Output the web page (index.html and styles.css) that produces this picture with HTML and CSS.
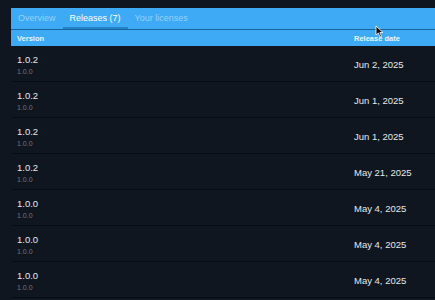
FILE: index.html
```html
<!DOCTYPE html>
<html lang="en">
<head>
    <meta charset="UTF-8">
    <title>Releases</title>
    <link rel="stylesheet" href="styles.css">
</head>
<body>
    <div class="panel">
        <div class="tabs">
            <span class="tab">Overview</span>
            <span class="tab active">Releases (7)</span>
            <span class="tab">Your licenses</span>
        </div>
        <div class="head row-grid">
            <span>Version</span>
            <span>Release date</span>
        </div>
        <div class="rows">
            <div class="row row-grid">
                <div class="vercell"><div class="ver">1.0.2</div><div class="sub">1.0.0</div></div>
                <div class="date">Jun 2, 2025</div>
            </div>
            <div class="row row-grid">
                <div class="vercell"><div class="ver">1.0.2</div><div class="sub">1.0.0</div></div>
                <div class="date">Jun 1, 2025</div>
            </div>
            <div class="row row-grid">
                <div class="vercell"><div class="ver">1.0.2</div><div class="sub">1.0.0</div></div>
                <div class="date">Jun 1, 2025</div>
            </div>
            <div class="row row-grid">
                <div class="vercell"><div class="ver">1.0.2</div><div class="sub">1.0.0</div></div>
                <div class="date">May 21, 2025</div>
            </div>
            <div class="row row-grid">
                <div class="vercell"><div class="ver">1.0.0</div><div class="sub">1.0.0</div></div>
                <div class="date">May 4, 2025</div>
            </div>
            <div class="row row-grid">
                <div class="vercell"><div class="ver">1.0.0</div><div class="sub">1.0.0</div></div>
                <div class="date">May 4, 2025</div>
            </div>
            <div class="row row-grid">
                <div class="vercell"><div class="ver">1.0.0</div><div class="sub">1.0.0</div></div>
                <div class="date">May 4, 2025</div>
            </div>
        </div>
    </div>

    <!-- mouse pointer from the screenshot -->
    <svg class="cursor" width="9" height="13" viewBox="0 0 9 13">
        <path d="M1 1 L1 10 L3.3 8 L5 12 L6.5 11.3 L4.9 7.5 L8 7.5 Z" fill="#111" stroke="#fff" stroke-width="0.8"/>
    </svg>
</body>
</html>
```

FILE: styles.css
```css
body {
    margin: 0;
    background: #0f1620;
    font-family: "Liberation Sans", Arial, sans-serif;
    overflow: hidden;
}
.panel {
    margin: 8px 0 0 11px;
}
.tabs {
    display: flex;
    height: 21px;
    background: #3ea9f5;
    border-bottom: 1px solid #17639a;
}
.tab {
    padding: 0 7px;
    font-size: 9px;
    line-height: 21px;
    color: #93d2fb;
    box-sizing: border-box;
}
.tab.active {
    color: #fff;
    border-bottom: 2px solid #2184c8;
    line-height: 20px;
    height: 21px;
}
.row-grid {
    display: grid;
    grid-template-columns: 337px 1fr;
    padding-left: 6px;
}
.head {
    background: #3ea9f5;
    height: 16px;
    align-items: center;
    font-size: 7.5px;
    font-weight: bold;
    color: #eaf6ff;
}
.row {
    height: 35px;
    border-bottom: 1px solid #070c13;
    align-items: center;
    margin-left: 1px;
    padding-left: 5px;
}
.vercell {
    padding-top: 3px;
}
.ver {
    font-size: 9.5px;
    color: #e6e9ed;
    line-height: 11px;
}
.sub {
    font-size: 7px;
    color: #6c7480;
    line-height: 9px;
    margin-top: 2px;
}
.date {
    font-size: 9.5px;
    color: #e6e9ed;
    padding-top: 2px;
}
.cursor {
    position: absolute;
    left: 375px;
    top: 25px;
}
```
